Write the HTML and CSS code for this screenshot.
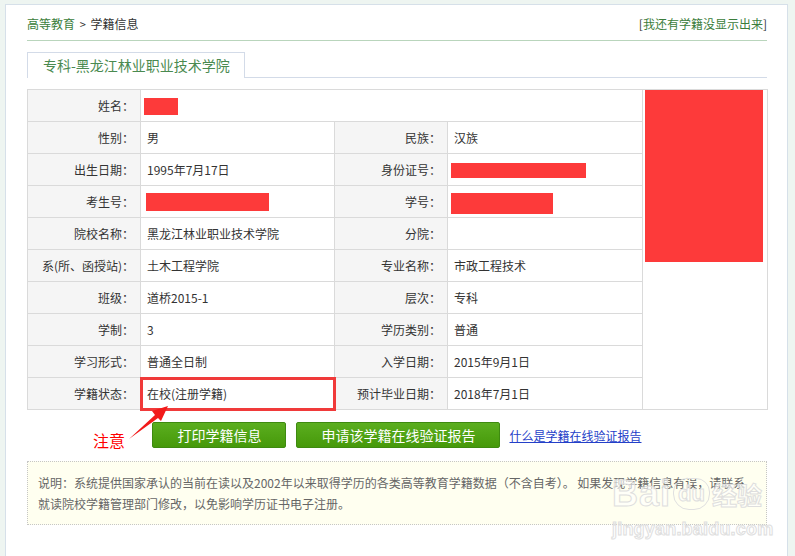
FILE: index.html
```html
<!DOCTYPE html>
<html lang="zh-CN">
<head>
<meta charset="utf-8">
<title>学籍信息</title>
<link rel="stylesheet" href="styles.css">
</head>
<body>
<div class="panel">
  <div class="crumb">
    <div class="crumb-left"><a class="green" href="#">高等教育</a> <span class="sep">&gt;</span> 学籍信息</div>
    <div class="crumb-right">[<a class="green" href="#">我还有学籍没显示出来</a>]</div>
  </div>
  <div class="tabs">
    <span class="tab">专科-黑龙江林业职业技术学院</span>
  </div>
  <table class="info">
    <colgroup>
      <col class="c-label"><col class="c-val1"><col class="c-label"><col class="c-val2"><col class="c-photo">
    </colgroup>
    <tr>
      <th>姓名：</th>
      <td colspan="3"><span class="redact r-name"></span></td>
      <td rowspan="10" class="photo"><div class="photo-img"></div></td>
    </tr>
    <tr><th>性别：</th><td>男</td><th>民族：</th><td>汉族</td></tr>
    <tr><th>出生日期：</th><td>1995年7月17日</td><th>身份证号：</th><td><span class="redact r-id"></span></td></tr>
    <tr><th>考生号：</th><td><span class="redact r-ksh"></span></td><th>学号：</th><td><span class="redact r-xh"></span></td></tr>
    <tr><th>院校名称：</th><td>黑龙江林业职业技术学院</td><th>分院：</th><td></td></tr>
    <tr><th>系(所、函授站)：</th><td>土木工程学院</td><th>专业名称：</th><td>市政工程技术</td></tr>
    <tr><th>班级：</th><td>道桥2015-1</td><th>层次：</th><td>专科</td></tr>
    <tr><th>学制：</th><td>3</td><th>学历类别：</th><td>普通</td></tr>
    <tr><th>学习形式：</th><td>普通全日制</td><th>入学日期：</th><td>2015年9月1日</td></tr>
    <tr><th>学籍状态：</th><td class="mark">在校(注册学籍)</td><th>预计毕业日期：</th><td>2018年7月1日</td></tr>
  </table>
  <div class="actions">
    <span class="note-tag">注意</span>
    <svg class="arrow" width="50" height="46" viewBox="0 0 50 46"><polygon points="4,39 30,15 27,11 43,6 36,21 33,18" fill="#f21a1a"/></svg>
    <a class="btn" href="#">打印学籍信息</a>
    <a class="btn" href="#">申请该学籍在线验证报告</a>
    <a class="link" href="#">什么是学籍在线验证报告</a>
  </div>
  <div class="note">说明：系统提供国家承认的当前在读以及2002年以来取得学历的各类高等教育学籍数据（不含自考）。 如果发现学籍信息有误，请联系<br>就读院校学籍管理部门修改，以免影响学历证书电子注册。</div>
  <div class="watermark" aria-hidden="true">
    <div class="wm-top"><span class="wm-bai">Bai</span><span class="wm-du">du</span><span class="wm-jy">经验</span></div>
    <div class="wm-url">jingyan.baidu.com</div>
  </div>
</div>
</body>
</html>
```
FILE: styles.css
```css
html, body {
  margin: 0;
  padding: 0;
}
body {
  background: #eef5f1;
  font-family: "Noto Sans CJK SC", "Noto Sans", sans-serif;
  font-size: 12px;
  color: #333;
  height: 556px;
  overflow: hidden;
}
a { text-decoration: none; }
.panel {
  position: relative;
  margin: 4px 0 0 5px;
  width: 740px;
  height: 551px;
  padding: 0 20px 0 21px;
  border: 1px solid #d6e0e9;
  background: #fff;
  overflow: hidden;
}
.crumb {
  display: flex;
  justify-content: space-between;
  padding-top: 9px;
  padding-bottom: 6px;
  line-height: 20px;
  border-bottom: 1px solid #b9d5bc;
}
.green { color: #3b7d3b; }
.sep { font-size: 11px; color: #333; padding: 0 2px; }
.crumb-right { color: #333; }
.tabs {
  margin-top: 11px;
  border-bottom: 1px solid #d3dbe8;
  height: 25px;
}
.tab {
  display: inline-block;
  height: 25px;
  line-height: 25px;
  padding: 0 14px 0 15px;
  border: 1px solid #d3dbe8;
  border-bottom: none;
  background: #fff;
  font-size: 14px;
  color: #4a8a50;
}
.info {
  margin-top: 11px;
  width: 740px;
  table-layout: fixed;
  border-collapse: collapse;
}
.c-label { width: 113px; }
.c-val1 { width: 194px; }
.c-val2 { width: 195px; }
.c-photo { width: 125px; }
.info th, .info td {
  border: 1px solid #dadada;
  height: 31px;
  padding: 0 6px;
  box-sizing: border-box;
  white-space: nowrap;
}
.info tr { height: 32px; }
.info th {
  background: #f5f5f5;
  font-weight: normal;
  text-align: right;
  color: #333;
}
.info td { text-align: left; color: #333; }
.info td.photo {
  padding: 0;
  vertical-align: top;
  background: #fff;
}
.photo-img {
  width: 118px;
  height: 172px;
  margin: 0 0 0 2px;
  background: #fd3a3a;
}
.redact {
  display: inline-block;
  vertical-align: middle;
  background: #fd3a3a;
  margin-left: -3px;
}
.r-name { width: 34px; height: 17px; }
.r-ksh { width: 123px; height: 18px; margin-left: -1px; }
.r-id { width: 135px; height: 15px; margin-top: -3px; }
.r-xh { width: 102px; height: 21px; margin-top: 3px; }
.info td.mark {
  outline: 3px solid #f03a3a;
  outline-offset: -2px;
}
.actions {
  position: relative;
  margin-top: 12px;
  height: 26px;
  display: flex;
  justify-content: center;
  align-items: center;
}
.btn {
  display: inline-block;
  height: 26px;
  box-sizing: border-box;
  line-height: 24px;
  padding: 0 24px;
  margin-right: 10px;
  border: 1px solid #3e8a10;
  border-radius: 2px;
  background: linear-gradient(#5bae1f, #46990a);
  color: #fff;
  font-size: 14px;
}
.btn + .btn { margin-right: 9px; }
.link {
  color: #2440c8;
  text-decoration: underline;
  font-size: 12px;
}
.note-tag {
  position: absolute;
  left: 66px;
  top: 8px;
  font-size: 16px;
  line-height: 20px;
  color: #f00;
}
.arrow {
  position: absolute;
  left: 98px;
  top: -22px;
}
.note {
  margin-top: 13px;
  border: 1px dotted #c6c6c6;
  background: #fffff0;
  padding: 10px 10px;
  line-height: 21px;
  color: #666;
  white-space: nowrap;
}
.watermark {
  position: absolute;
  left: 606px;
  top: 466px;
  color: rgba(255, 255, 255, 0.6);
  -webkit-text-stroke: 1px #dedede;
  font-family: "Liberation Sans", sans-serif;
  pointer-events: none;
}
.wm-top {
  display: flex;
  align-items: center;
  height: 46px;
}
.wm-bai { font-size: 36px; font-weight: bold; letter-spacing: 1px; }
.wm-du {
  display: inline-block;
  margin: 0 2px 0 2px;
  padding: 0 4px;
  height: 30px;
  line-height: 30px;
  border: 1px solid #e0e0e0;
  border-radius: 14px 14px 16px 16px;
  font-size: 22px;
  font-weight: bold;
}
.wm-jy {
  font-family: "Noto Sans CJK SC", sans-serif;
  font-size: 25px;
  font-weight: bold;
}
.wm-url {
  margin-top: 2px;
  font-size: 18px;
  font-weight: bold;
  letter-spacing: 0.2px;
}
```
